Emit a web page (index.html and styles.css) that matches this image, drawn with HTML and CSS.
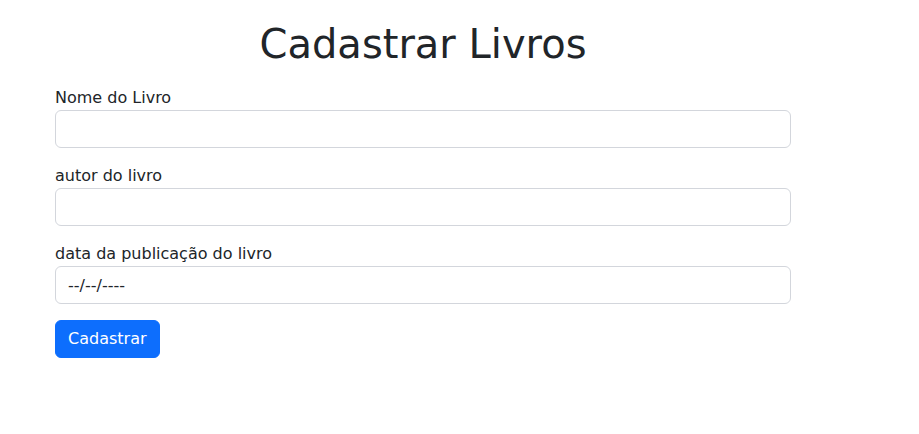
FILE: index.html
```html
<!DOCTYPE html>
<html lang="pt">
<head>
<meta charset="utf-8">
<title>Cadastrar Livros</title>
<link rel="stylesheet" href="styles.css">
</head>
<body>
<main class="page">
  <h1 class="title">Cadastrar Livros</h1>
  <form class="form">
    <div class="group">
      <label class="label" for="nome">Nome do Livro</label>
      <input class="field" id="nome" type="text">
    </div>
    <div class="group">
      <label class="label" for="autor">autor do livro</label>
      <input class="field" id="autor" type="text">
    </div>
    <div class="group">
      <label class="label" for="data">data da publicação do livro</label>
      <input class="field" id="data" type="text" value="--/--/----">
    </div>
    <div class="actions">
      <button class="btn" type="button">Cadastrar</button>
    </div>
  </form>
</main>
</body>
</html>
```
FILE: styles.css
```css
* { box-sizing: border-box; }
html, body { margin: 0; padding: 0; background: #fff; }
body {
  font-family: "DejaVu Sans", sans-serif;
  font-size: 16px;
  line-height: 24px;
  color: #212529;
}
.page {
  width: 736px;
  margin-left: 55px;
  padding-top: 20px;
}
.title {
  margin: 0 0 18px;
  font-size: 40px;
  font-weight: 400;
  line-height: 48px;
  text-align: center;
}
.form { display: flex; flex-direction: column; gap: 16px; }
.group { display: flex; flex-direction: column; }
.label { display: block; height: 24px; }
.field {
  display: block;
  width: 100%;
  height: 38px;
  padding: 6px 12px;
  font: inherit;
  color: #212529;
  background: #fff;
  border: 1px solid #d3d6dc;
  border-radius: 6px;
  outline: none;
}
.actions { display: flex; }
.btn {
  height: 38px;
  padding: 6px 12px;
  font: inherit;
  color: #fff;
  background: #0d6efd;
  border: 1px solid #0d6efd;
  border-radius: 6px;
}
```
